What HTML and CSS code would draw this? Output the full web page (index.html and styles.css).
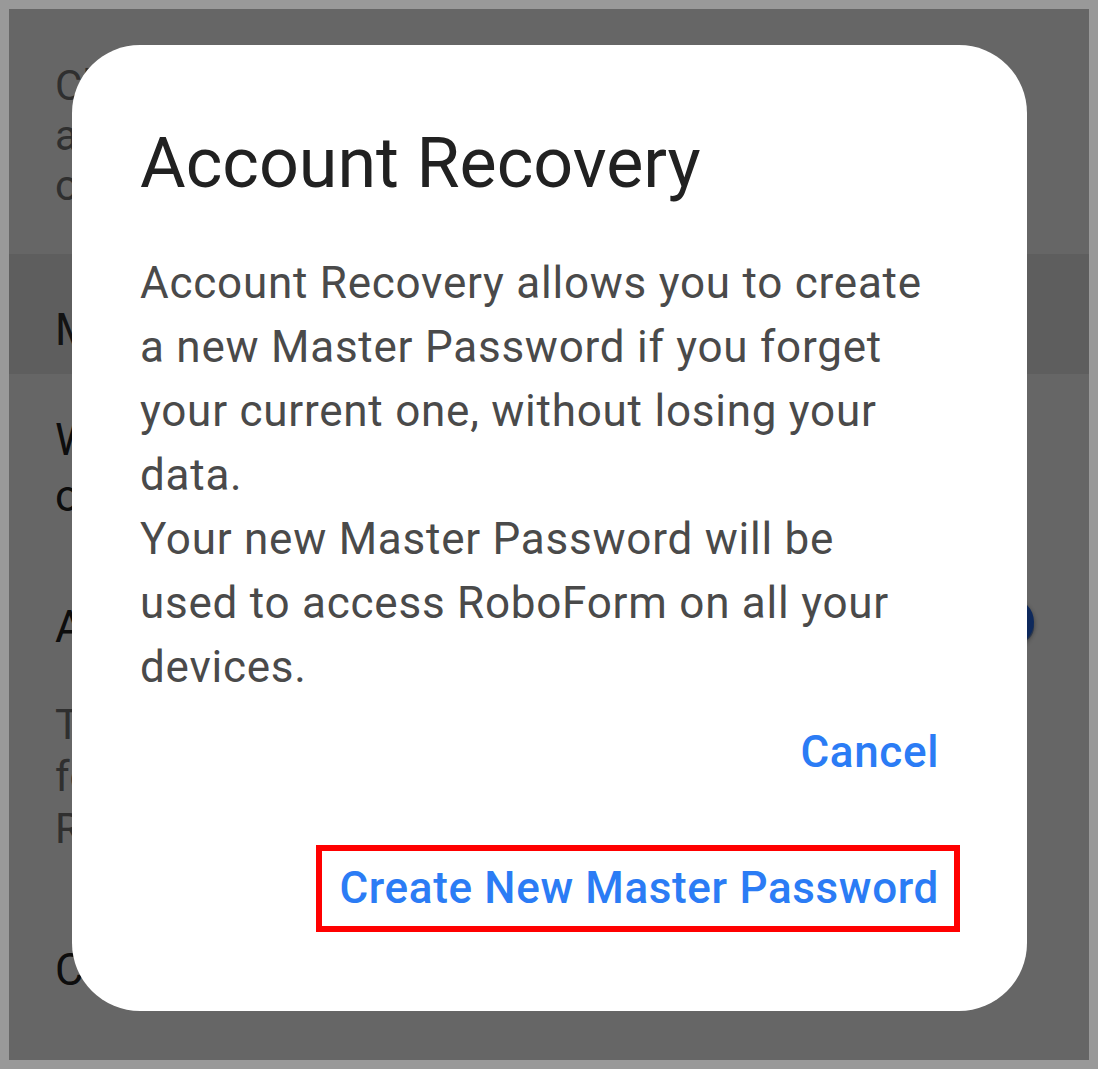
FILE: index.html
```html
<!DOCTYPE html>
<html lang="en">
<head>
<meta charset="utf-8">
<title>Account Recovery</title>
<link rel="stylesheet" href="styles.css">
</head>
<body>
<div class="frame">
  <div class="page">
    <section class="sec-top">
      <p class="secondary">Clear the clipboard automatically</p>
      <p class="secondary">after copying a login or password</p>
      <p class="secondary">of a site</p>
    </section>
    <div class="band">Master Password</div>
    <section class="item item-lock">
      <p class="primary">When to ask for Master Password</p>
      <p class="primary">on this device</p>
    </section>
    <section class="item item-recovery">
      <div class="row">
        <p class="primary">Account Recovery</p>
        <span class="toggle"><span class="thumb"></span></span>
      </div>
      <div class="desc">
        <p class="secondary">The ability to recover your account</p>
        <p class="secondary">for when you forget your</p>
        <p class="secondary">RoboForm Master Password</p>
      </div>
    </section>
    <section class="item item-change">
      <p class="primary">Change Master Password</p>
    </section>
  </div>
  <div class="scrim"></div>
  <div class="dialog" role="dialog">
    <h1 class="dialog-title">Account Recovery</h1>
    <div class="dialog-body">
      <p>Account Recovery allows you to create<br>a new Master Password if you forget<br>your current one, without losing your<br>data.</p>
      <p>Your new Master Password will be<br>used to access RoboForm on all your<br>devices.</p>
    </div>
    <div class="actions">
      <button class="btn">Cancel</button>
      <button class="btn btn-marked">Create New Master Password</button>
    </div>
  </div>
</div>
</body>
</html>
```
FILE: styles.css
```css
* { box-sizing: border-box; }
html, body { margin: 0; padding: 0; }
body {
  background: #999999;
  font-family: Roboto, "Noto Sans", "Liberation Sans", sans-serif;
  width: 1098px;
  height: 1069px;
  overflow: hidden;
}
p { margin: 0; }

.frame {
  position: relative;
  margin: 9px;
  width: 1080px;
  height: 1051px;
  background: #ffffff;
  overflow: hidden;
}

.page { padding-left: 46px; }

.secondary { color: #757575; font-size: 42px; line-height: 50px; white-space: nowrap; }
.primary { color: #212121; font-size: 44px; line-height: 56px; white-space: nowrap; }

.sec-top { height: 245px; padding-top: 52px; }

.band {
  height: 120px;
  margin-left: -46px;
  padding: 50px 0 0 46px;
  background: #ececec;
  color: #303030;
  font-size: 44px;
  line-height: 52px;
}

.item-lock { padding-top: 38px; }
.item-recovery { padding-top: 75px; }
.row { display: flex; align-items: center; justify-content: space-between; padding-right: 55px; }
.desc { padding-top: 44px; }
.desc .secondary { line-height: 52px; }
.item-change { padding-top: 87px; }

.toggle {
  position: relative;
  width: 80px;
  height: 32px;
  border-radius: 16px;
  background: #8fb6f5;
}
.thumb {
  position: absolute;
  right: 0;
  top: -13px;
  width: 48px;
  height: 48px;
  border-radius: 50%;
  background: #2468e6;
  box-shadow: 0 2px 5px rgba(0,0,0,0.45);
}

.scrim {
  position: absolute;
  inset: 0;
  background: rgba(0, 0, 0, 0.6);
}

.dialog {
  position: absolute;
  left: 63px;
  top: 36px;
  width: 955px;
  padding: 76px 67px 79px 68px;
  background: #ffffff;
  border-radius: 68px;
}

.dialog-title {
  margin: 0;
  font-size: 70px;
  line-height: 84px;
  font-weight: 400;
  color: #212121;
}

.dialog-body {
  margin-top: 46px;
  font-size: 44px;
  line-height: 64px;
  color: #4a4a4a;
  letter-spacing: 0.76px;
}

.actions {
  margin-top: 10px;
  display: flex;
  flex-direction: column;
  align-items: flex-end;
  gap: 49px;
}

.btn {
  font-family: Roboto, "Noto Sans", "Liberation Sans", sans-serif;
  font-weight: 500;
  font-size: 44px;
  line-height: 75px;
  letter-spacing: 0.65px;
  color: #2b7cf5;
  background: none;
  padding: 0 15px 0 17px;
  border: 6px solid transparent;
  cursor: pointer;
}
.btn-marked { border-color: #ff0000; }
```
